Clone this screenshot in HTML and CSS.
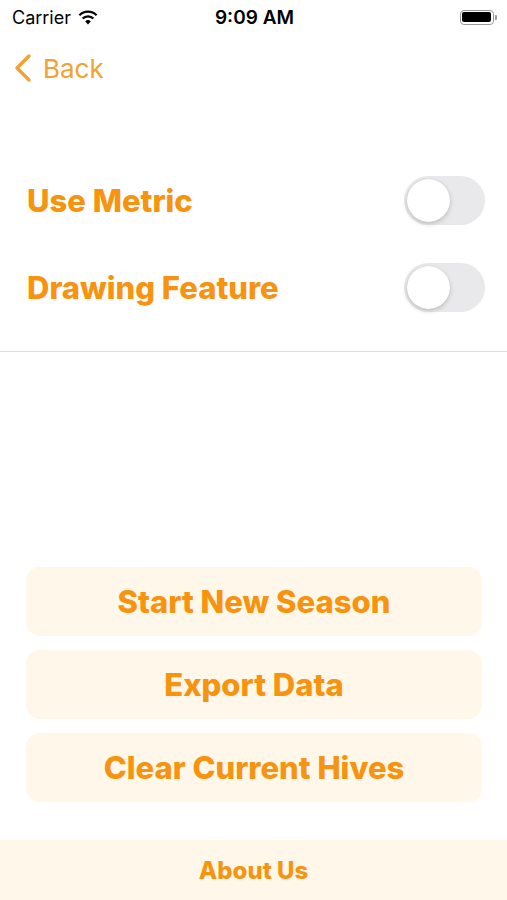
FILE: index.html
```html
<!DOCTYPE html>
<html lang="en">
<head>
  <meta charset="UTF-8" />
  <meta name="viewport" content="width=device-width, initial-scale=1.0" />
  <title>Settings</title>
  <link rel="stylesheet" href="styles.css">
</head>
<body>
  <div class="screen">
    <div class="status-bar">
      <div class="status-left">
        <span>Carrier</span>
        <svg class="wifi" width="20" height="15" viewBox="0 0 20 15">
          <path d="M10 14.5 L7.2 11.4 A4 4 0 0 1 12.8 11.4 Z" fill="#000"/>
          <path d="M4.6 8.6 A7.6 7.6 0 0 1 15.4 8.6" fill="none" stroke="#000" stroke-width="2.2"/>
          <path d="M1.4 5.2 A12.2 12.2 0 0 1 18.6 5.2" fill="none" stroke="#000" stroke-width="2.2"/>
        </svg>
      </div>
      <div class="status-time">9:09 AM</div>
      <div class="status-right">
        <div class="battery"><div class="battery-fill"></div></div>
        <div class="battery-cap"></div>
      </div>
    </div>

    <div class="nav">
      <a class="back" href="#">
        <svg width="20" height="30" viewBox="0 0 20 30">
          <path d="M16 3 L4 15 L16 27" fill="none" stroke="#f5a030" stroke-width="3.4" stroke-linecap="round" stroke-linejoin="round"/>
        </svg>
        <span>Back</span>
      </a>
    </div>

    <div class="settings">
      <div class="setting-row">
        <span class="setting-label">Use Metric</span>
        <div class="toggle"><div class="knob"></div></div>
      </div>
      <div class="setting-row">
        <span class="setting-label">Drawing Feature</span>
        <div class="toggle"><div class="knob"></div></div>
      </div>
    </div>

    <div class="spacer"></div>

    <div class="actions">
      <button>Start New Season</button>
      <button>Export Data</button>
      <button>Clear Current Hives</button>
    </div>

    <div class="about">About Us</div>
  </div>
</body>
</html>
```

FILE: styles.css
```css
* {
  box-sizing: border-box;
}

body {
  margin: 0;
  font-family: Inter, "Liberation Sans", sans-serif;
  background-color: #fff;
}

.screen {
  width: 507px;
  height: 900px;
  display: flex;
  flex-direction: column;
  overflow: hidden;
}

.status-bar {
  height: 34px;
  padding: 0 10px 0 12px;
  display: flex;
  align-items: center;
  justify-content: space-between;
  font-size: 18px;
  color: #000;
}

.status-left {
  width: 120px;
  display: flex;
  align-items: center;
  gap: 7px;
}

.status-time {
  font-weight: 600;
  font-size: 19px;
}

.status-right {
  width: 120px;
  display: flex;
  justify-content: flex-end;
  align-items: center;
  gap: 1px;
}

.battery {
  width: 34px;
  height: 15px;
  border: 1.5px solid #9a9a9a;
  border-radius: 4px;
  padding: 1.5px;
}

.battery-fill {
  width: 100%;
  height: 100%;
  background: #000;
  border-radius: 2px;
}

.battery-cap {
  width: 2px;
  height: 5px;
  background: #9a9a9a;
  border-radius: 0 1px 1px 0;
}

.nav {
  height: 68px;
  padding-left: 13px;
  display: flex;
  align-items: center;
}

.back {
  display: flex;
  align-items: center;
  gap: 10px;
  color: #f5a030;
  text-decoration: none;
  font-size: 26px;
}

.settings {
  padding-top: 55px;
  border-bottom: 1px solid #dcdcdc;
  padding-bottom: 20px;
}

.setting-row {
  height: 87px;
  padding: 0 22px 0 27px;
  display: flex;
  align-items: center;
  justify-content: space-between;
}

.setting-label {
  color: #f7930f;
  font-size: 31px;
  font-weight: 800;
}

.toggle {
  width: 81px;
  height: 49px;
  border-radius: 25px;
  background: #e9e9eb;
  padding: 3px;
}

.knob {
  width: 43px;
  height: 43px;
  border-radius: 50%;
  background: #fff;
  box-shadow: 0 2px 5px rgba(0, 0, 0, 0.18), 0 0 1px rgba(0, 0, 0, 0.15);
}

.spacer {
  flex: 1;
}

.actions {
  padding: 0 25px 0 26px;
  display: flex;
  flex-direction: column;
  gap: 14px;
  margin-bottom: 38px;
}

.actions button {
  height: 69px;
  border: none;
  border-radius: 14px;
  background: #fff8ea;
  color: #f7930f;
  font-family: inherit;
  font-size: 31px;
  font-weight: 800;
  cursor: pointer;
}

.about {
  height: 60px;
  background: #fff8ea;
  color: #f7930f;
  font-size: 24px;
  font-weight: 800;
  display: flex;
  align-items: center;
  justify-content: center;
}
```
